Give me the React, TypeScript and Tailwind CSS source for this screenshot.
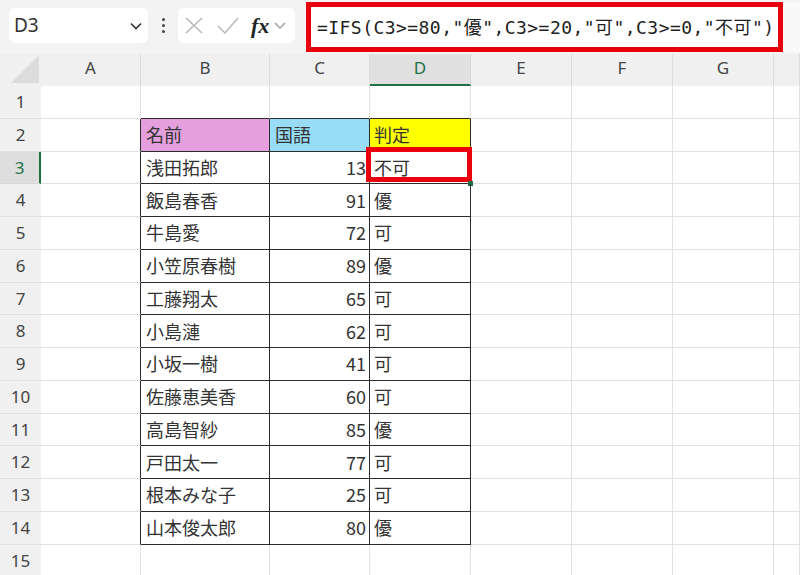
import React from "react"

const rows: [string, number, string][] = [
  ["浅田拓郎", 13, "不可"],
  ["飯島春香", 91, "優"],
  ["牛島愛", 72, "可"],
  ["小笠原春樹", 89, "優"],
  ["工藤翔太", 65, "可"],
  ["小島漣", 62, "可"],
  ["小坂一樹", 41, "可"],
  ["佐藤恵美香", 60, "可"],
  ["高島智紗", 85, "優"],
  ["戸田太一", 77, "可"],
  ["根本みな子", 25, "可"],
  ["山本俊太郎", 80, "優"],
]

const cols = ["A", "B", "C", "D", "E", "F", "G", ""]

const ui = { fontFamily: '"Noto Sans", "Open Sans", sans-serif' }
const jp = { fontFamily: '"Noto Sans CJK JP", "Noto Sans", sans-serif' }
const mono = { fontFamily: '"DejaVu Sans Mono", "Noto Sans CJK JP", monospace' }

function Toolbar() {
  return (
    <div className="flex items-start h-[54px] bg-[#f3f3f3]">
      {/* name box */}
      <div className="ml-[9px] mt-2 w-[139px] h-[35px] rounded-md bg-white flex items-center justify-between pl-[5px] pr-[5px]">
        <span className="text-[19px] text-[#333]" style={ui}>D3</span>
        <svg width="14" height="10" viewBox="0 0 14 10" fill="none" stroke="#333" strokeWidth="1.6">
          <path d="M2 2.5 L7 7.5 L12 2.5" />
        </svg>
      </div>
      <div className="w-[30px] h-[50px] flex flex-col items-center justify-center gap-[3px]">
        <div className="w-[3px] h-[3px] rounded-full bg-[#444]" />
        <div className="w-[3px] h-[3px] rounded-full bg-[#444]" />
        <div className="w-[3px] h-[3px] rounded-full bg-[#444]" />
      </div>
      {/* cancel / enter / fx */}
      <div className="mt-2 w-[117px] h-[35px] rounded-md bg-white flex items-center pl-[7px]">
        <svg width="18" height="17" viewBox="0 0 18 17" fill="none" stroke="#b5b5b5" strokeWidth="1.4">
          <path d="M1 1 L17 16 M17 1 L1 16" />
        </svg>
        <svg className="ml-[14px]" width="22" height="17" viewBox="0 0 22 17" fill="none" stroke="#b5b5b5" strokeWidth="1.4">
          <path d="M1 9 L8 16 L21 1" />
        </svg>
        <span className="ml-[12px] text-[22px] italic font-bold text-[#222] leading-none" style={{ fontFamily: '"Liberation Serif", serif' }}>fx</span>
        <svg className="ml-[5px]" width="12" height="9" viewBox="0 0 12 9" fill="none" stroke="#999" strokeWidth="1.3">
          <path d="M1 2 L6 7 L11 2" />
        </svg>
      </div>
      {/* formula */}
      <div className="ml-[11px] mt-[2px] w-[477px] h-[50px] border-[5px] border-[#e8000b] bg-white flex items-center pl-[6px]">
        <span className="text-[18px] text-[#222] tracking-[0.45px] whitespace-nowrap" style={mono}>
          =IFS(C3&gt;=80,"優",C3&gt;=20,"可",C3&gt;=0,"不可")
        </span>
      </div>
      <div className="flex-1 mt-[2px] h-[50px] bg-[#f9f9f9]" />
    </div>
  )
}

function Cell({ className = "", children }: { className?: string; children?: React.ReactNode }) {
  return <div className={"h-[32.75px] flex items-center border-b border-r " + className}>{children}</div>
}

export default function App() {
  const total = 15
  return (
    <div className="w-[800px] h-[575px] overflow-hidden bg-white" style={ui}>
      <Toolbar />
      <div className="grid grid-cols-[41px_100px_129px_100px_101px_101px_101px_101px_1fr]">
        {/* header row */}
        <div className="h-[32px] bg-[#f0f0f0] relative">
          <svg className="absolute right-[2px] bottom-[3px]" width="28" height="28" viewBox="0 0 28 28">
            <path d="M28 0 L28 28 L0 28 Z" fill="#dcdcdc" />
          </svg>
        </div>
        {cols.map((c) =>
          c === "D" ? (
            <div key={c} className="h-[32px] bg-[#e0e0e0] border-r border-[#d6d6d6] border-b-2 border-b-[#1e7145] flex items-center justify-center pb-[3px] text-[17px] text-[#1e7145]">
              {c}
            </div>
          ) : (
            <div key={c || "h"} className="h-[32px] bg-[#f0f0f0] border-r border-[#dcdcdc] flex items-center justify-center pb-1 text-[17px] text-[#444]">
              {c}
            </div>
          )
        )}

        {Array.from({ length: total }, (_, i) => {
          const r = i + 1
          const inTable = r >= 2 && r <= 14
          const data = r >= 3 && r <= 14 ? rows[r - 3] : null
          const dark = "border-[#2b2b2b]"
          const light = "border-[#e1e1e1]"
          return (
            <React.Fragment key={r}>
              {r === 3 ? (
                <div className="h-[32.75px] bg-[#dedede] border-r-2 border-r-[#1e7145] border-b border-b-[#d6d6d6] flex items-center justify-center text-[17px] text-[#1e7145]">
                  {r}
                </div>
              ) : (
                <div className="h-[32.75px] bg-[#f0f0f0] border-b border-[#e0e0e0] flex items-center justify-center text-[17px] text-[#444]">
                  {r}
                </div>
              )}
              {/* A */}
              <Cell className={inTable ? "border-b-[#e1e1e1] border-r-[#2b2b2b]" : light} />
              {/* B */}
              {r === 2 ? (
                <Cell className={dark + " bg-[#e4a0dc] pl-[5px] text-[18px] text-[#333]"}>
                  <span style={jp}>名前</span>
                </Cell>
              ) : data ? (
                <Cell className={dark + " pl-[5px] text-[18px] text-[#333]"}>
                  <span style={jp}>{data[0]}</span>
                </Cell>
              ) : (
                <Cell className={r === 1 ? "border-b-[#2b2b2b] border-r-[#e1e1e1]" : light} />
              )}
              {/* C */}
              {r === 2 ? (
                <Cell className={dark + " bg-[#98dcf6] pl-[5px] text-[18px] text-[#333]"}>
                  <span style={jp}>国語</span>
                </Cell>
              ) : data ? (
                <Cell className={dark + " justify-end pr-[3px] text-[18px] text-[#333]"}>
                  <span style={jp}>{data[1]}</span>
                </Cell>
              ) : (
                <Cell className={r === 1 ? "border-b-[#2b2b2b] border-r-[#e1e1e1]" : light} />
              )}
              {/* D */}
              {r === 2 ? (
                <Cell className={dark + " bg-[#ffff00] pl-[4px] text-[18px] text-[#333]"}>
                  <span style={jp}>判定</span>
                </Cell>
              ) : data ? (
                <Cell className={dark + " relative pl-[4px] text-[18px] text-[#333]"}>
                  <span style={jp}>{data[2]}</span>
                  {r === 3 && (
                    <>
                      <div className="absolute left-[-4px] right-[-2px] top-[-5px] bottom-[1px] border-[5px] border-[#e8000b]" />
                      <div className="absolute right-[-3px] bottom-[-3px] w-[5px] h-[5px] bg-[#1e7145]" />
                    </>
                  )}
                </Cell>
              ) : (
                <Cell className={r === 1 ? "border-b-[#2b2b2b] border-r-[#e1e1e1]" : light} />
              )}
              <Cell className={light} />
              <Cell className={light} />
              <Cell className={light} />
              <Cell className={light} />
            </React.Fragment>
          )
        })}
      </div>
    </div>
  )
}
